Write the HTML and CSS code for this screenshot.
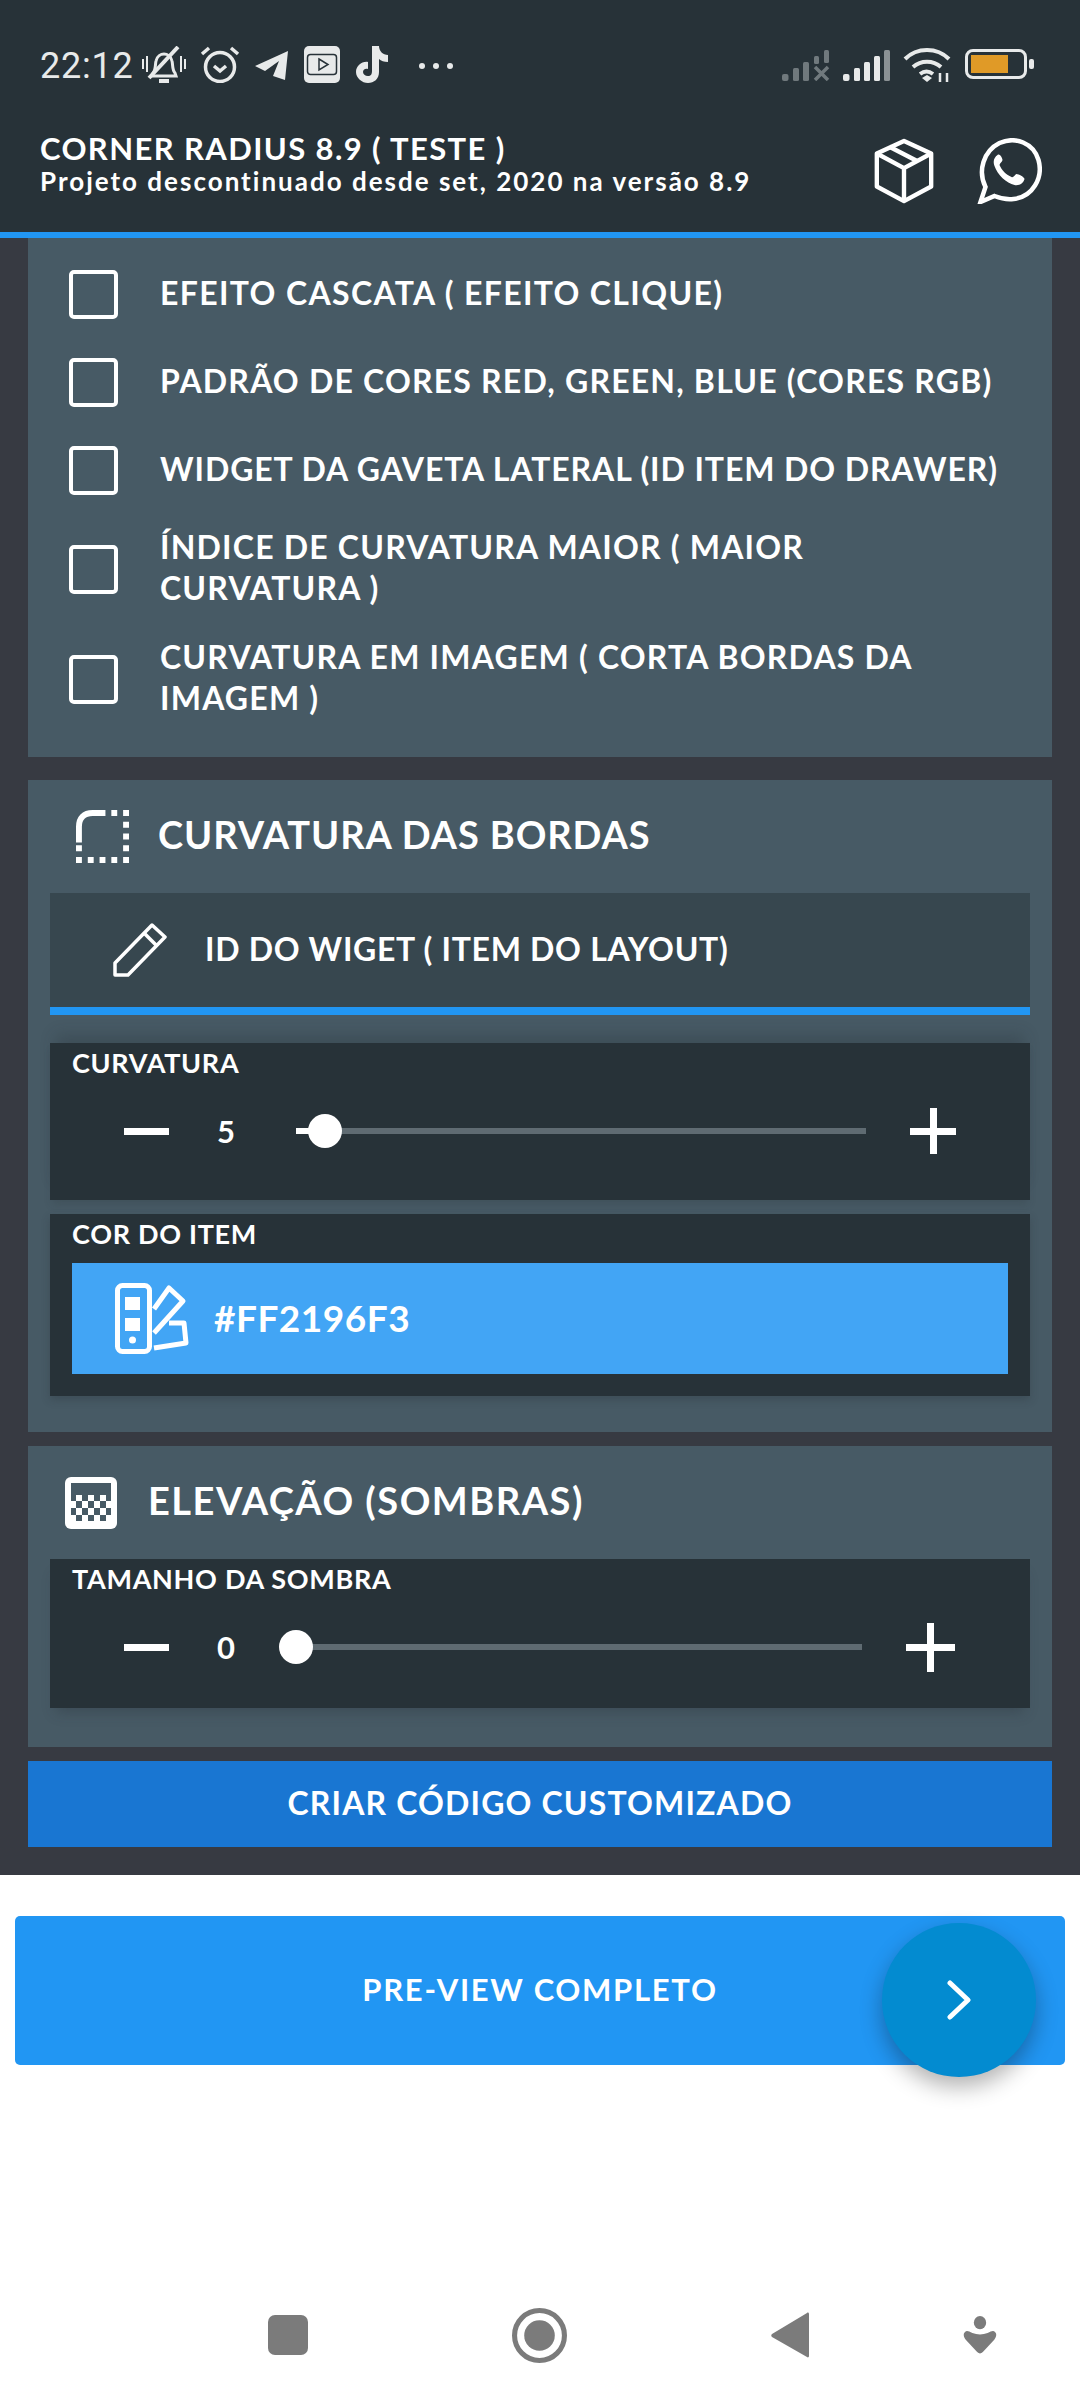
FILE: index.html
```html
<!DOCTYPE html>
<html lang="en">
<head>
  <meta charset="UTF-8">
  <title>Corner Radius</title>
  <link rel="stylesheet" href="styles.css">
</head>
<body>
  <header class="topbar">
    <div class="status">
      <span class="clock">22:12</span>
      <svg class="st-icon bell" width="46" height="38" viewBox="0 0 46 38" fill="none" stroke="#e8eaea" stroke-width="3">
        <path d="M12 27c3-3 2-8 3-12 1-5 5-7 8-7s7 2 8 7c1 4 0 9 3 12l1 3H11z"/>
        <path d="M18 35h10" stroke-width="4"/>
        <path d="M8 32 37 1" stroke-width="4"/>
        <path d="M2 13v10M6 10v16M40 10v16M44 13v10" stroke-width="2"/>
      </svg>
      <svg class="st-icon alarm" width="40" height="37" viewBox="0 0 40 37" fill="none" stroke="#e8eaea" stroke-width="3.500">
        <circle cx="20" cy="21" r="14.500"/>
        <path d="M14 20l6 5 6-5"/>
        <path d="M2 8l7-6M38 8l-7-6"/>
      </svg>
      <svg class="st-icon plane" width="34" height="30" viewBox="0 0 34 30" fill="#e8eaea">
        <path d="M0 15 33 0 30 29 18 25 24 10 10 20z"/>
      </svg>
      <svg class="st-icon yt" width="36" height="37" viewBox="0 0 36 37">
        <rect width="36" height="37" rx="5" fill="#e8eaea"/>
        <rect x="3.500" y="8.500" width="29" height="20" rx="3" fill="none" stroke="#273238" stroke-width="1.500"/>
        <path d="M15 13l9 5.500-9 5.500z" fill="none" stroke="#273238" stroke-width="1.500"/>
      </svg>
      <svg class="st-icon tiktok" width="32" height="37" viewBox="0 0 32 37" fill="#e8eaea">
        <path d="M16 0h7c0 5 4 9 9 9v7c-4 0-7-1-9-3v13c0 7-5 11-11 11S0 32 0 26s6-11 12-10v7c-3-1-5 1-5 3s2 4 5 4 4-2 4-5z"/>
      </svg>
      <span class="dots"><i></i><i></i><i></i></span>
      <span class="grow"></span>
      <svg class="st-icon sig-off" width="48" height="31" viewBox="0 0 48 31" fill="#70797d">
        <rect x="0" y="24" width="6.500" height="7" rx="2"/>
        <rect x="11" y="18" width="6" height="13" rx="1.500"/>
        <rect x="21" y="12" width="6" height="19" rx="1.500"/>
        <rect x="32" y="6" width="5" height="8" rx="1.500"/>
        <rect x="42" y="0" width="5" height="13" rx="1.500"/>
        <path d="M33 17l13 13M46 17 33 30" fill="none" stroke="#70797d" stroke-width="3.500"/>
      </svg>
      <svg class="st-icon signal" width="47" height="31" viewBox="0 0 47 31">
        <rect x="0" y="24" width="6.500" height="7" rx="2" fill="#e8eaea"/>
        <rect x="11" y="18" width="6" height="13" rx="1.500" fill="#e8eaea"/>
        <rect x="21" y="12" width="6" height="19" rx="1.500" fill="#e8eaea"/>
        <rect x="31" y="6" width="6" height="25" rx="1.500" fill="#e8eaea"/>
        <rect x="41" y="0" width="6" height="31" rx="1.500" fill="#8b9295"/>
      </svg>
      <svg class="st-icon wifi" width="48" height="36" viewBox="0 0 48 36" fill="none" stroke="#e8eaea" stroke-width="4">
        <path d="M2 12C14 0 34 0 46 12M10 20c8-7 20-7 28 0M17 27c4-3 9-3 13 0"/>
        <path d="M19 31l5-3 5 3-5 4z" fill="#e8eaea" stroke="none"/>
        <path d="M37 35V26M44 35V26" stroke-width="2.500"/>
      </svg>
      <span class="battery"><span class="battery-fill"></span></span>
      <span class="battery-tip"></span>
    </div>
    <div class="appbar">
      <div class="appbar-text">
        <div class="app-title">CORNER RADIUS 8.9 ( TESTE )</div>
        <div class="app-sub">Projeto descontinuado desde set, 2020 na versão 8.9</div>
      </div>
      <svg class="box-icon" width="62" height="66" viewBox="0 0 62 68" fill="none" stroke="#fff" stroke-width="4.500" stroke-linejoin="round">
        <path d="M31 3 59 16V50L31 65 3 50V16z"/>
        <path d="M3 16 31 31 59 16M31 31V65M16 9 45 24"/>
      </svg>
      <svg class="wa-icon" width="65" height="66" viewBox="2 1 64 66" fill="none" stroke="#fff">
        <path d="M5 65 10 50C2 34 8 14 24 6 40-1 58 6 63 23 68 41 57 60 38 62 30 63 24 61 19 59z" stroke-width="4.500"/>
        <path d="M22 18c-3 2-5 6-3 11 3 9 12 17 20 19 5 1 9-2 10-6 0-2-6-5-8-5-2 1-3 4-5 3-5-2-10-7-12-12 0-2 3-3 3-5 0-2-3-7-5-5z" fill="#fff" stroke="none"/>
      </svg>
    </div>
  </header>

  <main class="content">
    <section class="card card-checks">
      <div class="check-row"><span class="checkbox"></span><span class="check-label label-wide">EFEITO CASCATA ( EFEITO CLIQUE)</span></div>
      <div class="check-row"><span class="checkbox"></span><span class="check-label">PADRÃO DE CORES RED, GREEN, BLUE (CORES RGB)</span></div>
      <div class="check-row"><span class="checkbox"></span><span class="check-label label-tight">WIDGET DA GAVETA LATERAL (ID ITEM DO DRAWER)</span></div>
      <div class="check-row tall"><span class="checkbox"></span><span class="check-label">ÍNDICE DE CURVATURA MAIOR ( MAIOR CURVATURA )</span></div>
      <div class="check-row tall"><span class="checkbox"></span><span class="check-label">CURVATURA EM IMAGEM ( CORTA BORDAS DA IMAGEM )</span></div>
    </section>

    <section class="card card-radius">
      <div class="card-head head-radius">
        <svg width="53" height="53" viewBox="0 0 54 54" fill="none" stroke="#fff" stroke-width="6">
          <path d="M3 33V17C3 8 8 3 17 3H30"/>
          <path d="M36 0h6v6h-6zM48 0h6v6h-6zM48 12h6v6h-6zM48 24h6v6h-6zM48 36h6v6h-6zM48 48h6v6h-6zM36 48h6v6h-6zM24 48h6v6h-6zM12 48h6v6h-6zM0 48h6v6H0zM0 36h6v6H0z" fill="#fff" stroke="none"/>
        </svg>
        <span class="card-title">CURVATURA DAS BORDAS</span>
      </div>
      <div class="id-field">
        <svg width="54" height="54" viewBox="0 0 54 54" fill="none" stroke="#fff" stroke-width="3.500" stroke-linejoin="round">
          <path d="M2 40 39 2 52 14 15 52H2z"/>
          <path d="M31 10 44 23"/>
        </svg>
        <span class="id-text">ID DO WIGET ( ITEM DO LAYOUT)</span>
      </div>
      <div class="panel panel-curv">
        <div class="panel-label">CURVATURA</div>
        <div class="slider-row">
          <span class="minus"></span>
          <span class="value">5</span>
          <div class="track track-curv">
            <span class="track-done"></span>
            <span class="thumb"></span>
          </div>
          <span class="plus"></span>
        </div>
      </div>
      <div class="panel panel-color">
        <div class="panel-label">COR DO ITEM</div>
        <div class="color-box">
          <svg width="74" height="71" viewBox="0 0 74 71" fill="none" stroke="#fff" stroke-width="5" stroke-linejoin="round">
            <rect x="2.500" y="2.500" width="32" height="66" rx="5"/>
            <path d="M10 14h15v13H10zM10 35h15v13H10z" fill="#fff" stroke="none"/>
            <circle cx="17.500" cy="57" r="3.500" fill="#fff" stroke="none"/>
            <path d="M39 26 54 5 68 18 39 50M54 40h15l2 20-32 5"/>
          </svg>
          <span class="color-text">#FF2196F3</span>
        </div>
      </div>
    </section>

    <section class="card card-shadow">
      <div class="card-head head-shadow">
        <svg width="52" height="52" viewBox="0 0 52 52">
          <rect width="52" height="52" rx="6" fill="#fff"/>
          <rect x="6" y="6" width="40" height="32" fill="#475a65"/>
          <path d="M11 18h6v6h-6zM23 18h6v6h-6zM35 18h6v6h-6zM5 24h6v7H5zM17 24h6v7h-6zM29 24h6v7h-6zM41 24h6v7h-6zM11 31h6v7h-6zM23 31h6v7h-6zM35 31h6v7h-6z" fill="#fff"/>
          <path d="M11 38h6v6h-6zM23 38h6v6h-6zM35 38h6v6h-6z" fill="#475a65"/>
        </svg>
        <span class="card-title title-wide">ELEVAÇÃO (SOMBRAS)</span>
      </div>
      <div class="panel panel-sombra">
        <div class="panel-label">TAMANHO DA SOMBRA</div>
        <div class="slider-row">
          <span class="minus"></span>
          <span class="value">0</span>
          <div class="track track-sombra">
            <span class="thumb at-zero"></span>
          </div>
          <span class="plus plus-big"></span>
        </div>
      </div>
    </section>

    <div class="create-btn">CRIAR CÓDIGO CUSTOMIZADO</div>
  </main>

  <div class="preview-area">
    <div class="preview-btn">PRE-VIEW COMPLETO</div>
    <div class="fab">
      <svg width="24" height="40" viewBox="0 0 24 40" fill="none" stroke="#fff" stroke-width="5" stroke-linecap="round" stroke-linejoin="round">
        <path d="M3 3 21 20 3 37"/>
      </svg>
    </div>
  </div>

  <nav class="navbar">
    <svg class="nav-square" width="40" height="40" viewBox="0 0 40 40"><rect width="40" height="40" rx="7" fill="#7b7b7b"/></svg>
    <svg class="nav-home" width="55" height="55" viewBox="0 0 54 54"><circle cx="27" cy="27" r="24.500" fill="none" stroke="#7b7b7b" stroke-width="5"/><circle cx="27" cy="27" r="15" fill="#7b7b7b"/></svg>
    <svg class="nav-back" width="38" height="46" viewBox="0 0 38 46" fill="#7b7b7b"><path d="M36 1 1 22c-1 1-1 2 0 3l35 20c1 1 2 0 2-1V2c0-1-1-2-2-1z" /></svg>
    <svg class="nav-extra" width="36" height="38" viewBox="0 0 36 40" fill="#7b7b7b"><ellipse cx="18" cy="7" rx="6.500" ry="7"/><path d="M2 17c2-2 4-1 8 1 5 2 11 2 16 0 4-2 6-3 8-1 2 2 1 5-1 8L21 38c-2 2-4 2-6 0L3 25c-2-3-3-6-1-8z"/></svg>
  </nav>
</body>
</html>
```

FILE: styles.css
```css
* {
  box-sizing: border-box;
}
body {
  margin: 0;
  padding: 0;
  width: 1080px;
  height: 2400px;
  background-color: #fff;
  font-family: Lato, "Noto Sans", sans-serif;
  color: #fff;
  overflow: hidden;
}

/* top bar */
.topbar {
  height: 238px;
  background-color: #273238;
  border-bottom: 6px solid #2196f3;
}
.status {
  height: 128px;
  padding: 46px 46px 0 40px;
  display: flex;
  align-items: flex-start;
}
.clock {
  flex: none;
  width: 101px;
  font-family: Roboto, sans-serif;
  font-size: 36px;
  line-height: 40px;
  letter-spacing: 0.8px;
  color: #e8eaea;
}
.st-icon {
  flex: none;
}
.bell {
  margin-right: 13px;
}
.alarm {
  margin-right: 15px;
}
.plane {
  margin: 5px 15px 0 0;
}
.yt {
  margin-right: 16px;
}
.dots {
  display: flex;
  gap: 8px;
  margin: 17px 0 0 31px;
}
.dots i {
  width: 6px;
  height: 6px;
  border-radius: 50%;
  background-color: #e8eaea;
}
.grow {
  flex: 1;
}
.sig-off {
  margin: 4px 13px 0 0;
}
.signal {
  margin: 4px 13px 0 0;
}
.wifi {
  margin: 1px 14px 0 0;
}
.battery {
  width: 62px;
  height: 30px;
  margin-top: 3px;
  padding: 3px;
  border: 3px solid #e8eaea;
  border-radius: 8px;
}
.battery-fill {
  display: block;
  width: 37px;
  height: 100%;
  background-color: #e09a27;
}
.battery-tip {
  width: 5px;
  height: 10px;
  margin: 13px 0 0 2px;
  background-color: #e8eaea;
  border-radius: 2px;
}
.appbar {
  display: flex;
  align-items: flex-start;
  padding: 4px 38px 0 40px;
  height: 98px;
}
.appbar-text {
  flex: 1;
}
.app-title {
  font-size: 31px;
  font-weight: 700;
  line-height: 32px;
  letter-spacing: 1.400px;
}
.app-sub {
  margin-top: 2px;
  font-size: 26px;
  font-weight: 700;
  line-height: 30px;
  letter-spacing: 2px;
}
.box-icon {
  margin: 6px 42px 0 0;
}
.wa-icon {
  margin-top: 6px;
}

/* dark content */
.content {
  height: 1637px;
  background-color: #373a42;
  padding: 0 28px;
}
.card {
  background-color: #475a65;
}
.card-checks {
  height: 519px;
  padding: 12px 46px 0 41px;
}
.check-row {
  display: flex;
  align-items: center;
  gap: 42px;
  height: 88px;
}
.check-row.tall {
  height: 110px;
}
.checkbox {
  flex: none;
  width: 49px;
  height: 49px;
  border: 4.500px solid #fff;
  border-radius: 5px;
}
.check-label {
  font-size: 32px;
  font-weight: 700;
  line-height: 41px;
  letter-spacing: 1.200px;
  padding-bottom: 4px;
}
.label-wide {
  letter-spacing: 1.350px;
}
.label-tight {
  letter-spacing: 0.900px;
}
.card-radius {
  height: 652px;
  margin-top: 23px;
  padding: 0 22px;
}
.card-head {
  display: flex;
  align-items: center;
}
.head-radius {
  height: 113px;
  padding-left: 26px;
  gap: 29px;
}
.card-title {
  font-size: 38px;
  font-weight: 700;
  letter-spacing: 0.900px;
  padding-bottom: 5px;
}
.title-wide {
  letter-spacing: 1.500px;
}
.id-field {
  height: 122px;
  display: flex;
  align-items: center;
  gap: 38px;
  padding-left: 63px;
  background-color: #37474f;
  border-bottom: 8px solid #2196f3;
}
.id-text {
  font-size: 32px;
  font-weight: 700;
  letter-spacing: 0.700px;
  padding-bottom: 3px;
}
.panel {
  background-color: #273238;
  padding: 0 22px;
}
.panel-label {
  font-size: 27px;
  font-weight: 700;
  line-height: 36px;
  letter-spacing: 0.700px;
  padding-top: 2px;
  height: 38px;
}
.panel-curv {
  height: 157px;
  margin-top: 28px;
  box-shadow: 0 -14px 14px -6px rgba(39, 50, 56, 0.3), 0 6px 8px -2px rgba(39, 50, 56, 0.2);
}
.panel-color {
  height: 182px;
  margin-top: 14px;
  box-shadow: 0 4px 8px rgba(39, 50, 56, 0.3);
}
.color-box {
  height: 111px;
  margin-top: 11px;
  display: flex;
  align-items: center;
  gap: 25px;
  padding-left: 43px;
  background-color: #42a5f5;
}
.color-text {
  font-size: 37px;
  font-weight: 700;
  letter-spacing: 0.500px;
  padding-bottom: 3px;
}
.slider-row {
  display: flex;
  align-items: center;
  margin-top: 25px;
  height: 50px;
}
.minus {
  flex: none;
  width: 45px;
  height: 7px;
  margin-left: 52px;
  background-color: #fff;
}
.value {
  flex: none;
  width: 70px;
  margin-left: 22px;
  text-align: center;
  font-size: 31px;
  font-weight: 700;
}
.plus {
  flex: none;
  width: 46px;
  height: 46px;
  margin-right: 52px;
  background:
    linear-gradient(#fff, #fff) center / 100% 7px no-repeat,
    linear-gradient(#fff, #fff) center / 7px 100% no-repeat;
}
.plus-big {
  width: 49px;
  height: 49px;
  margin-right: 53px;
}
.track {
  flex: 1;
  position: relative;
  height: 6px;
  margin: 0 44px 0 35px;
  background-color: #5f6b72;
}
.track-done {
  position: absolute;
  left: 0;
  top: 0;
  width: 30px;
  height: 6px;
  background-color: #fff;
}
.thumb {
  position: absolute;
  left: 12px;
  top: -14px;
  width: 34px;
  height: 34px;
  border-radius: 50%;
  background-color: #fff;
}
.thumb.at-zero {
  left: -17px;
}
.card-shadow {
  height: 301px;
  margin-top: 14px;
  padding: 0 22px;
}
.head-shadow {
  height: 113px;
  padding-left: 15px;
  gap: 31px;
}
.panel-sombra {
  height: 149px;
  box-shadow: 0 10px 12px -6px rgba(39, 50, 56, 0.35);
}
.create-btn {
  height: 86px;
  margin-top: 14px;
  padding-bottom: 3px;
  display: flex;
  align-items: center;
  justify-content: center;
  background-color: #1976d2;
  font-size: 32px;
  font-weight: 700;
  letter-spacing: 1.150px;
}

/* white area */
.preview-area {
  position: relative;
  height: 400px;
  padding: 41px 15px 0;
}
.preview-btn {
  height: 149px;
  padding-bottom: 4px;
  display: flex;
  align-items: center;
  justify-content: center;
  background-color: #2196f3;
  border-radius: 5px;
  font-size: 31px;
  font-weight: 700;
  letter-spacing: 1.700px;
}
.fab {
  position: absolute;
  left: 882px;
  top: 48px;
  width: 154px;
  height: 154px;
  border-radius: 50%;
  display: flex;
  align-items: center;
  justify-content: center;
  background-color: #038bd0;
  box-shadow: 0 10px 22px rgba(0, 0, 0, 0.3);
}
.navbar {
  height: 120px;
  display: flex;
  align-items: center;
  padding-left: 268px;
}
.nav-home,
.nav-back {
  margin-left: 204px;
}
.nav-extra {
  margin-left: 153px;
}
```
